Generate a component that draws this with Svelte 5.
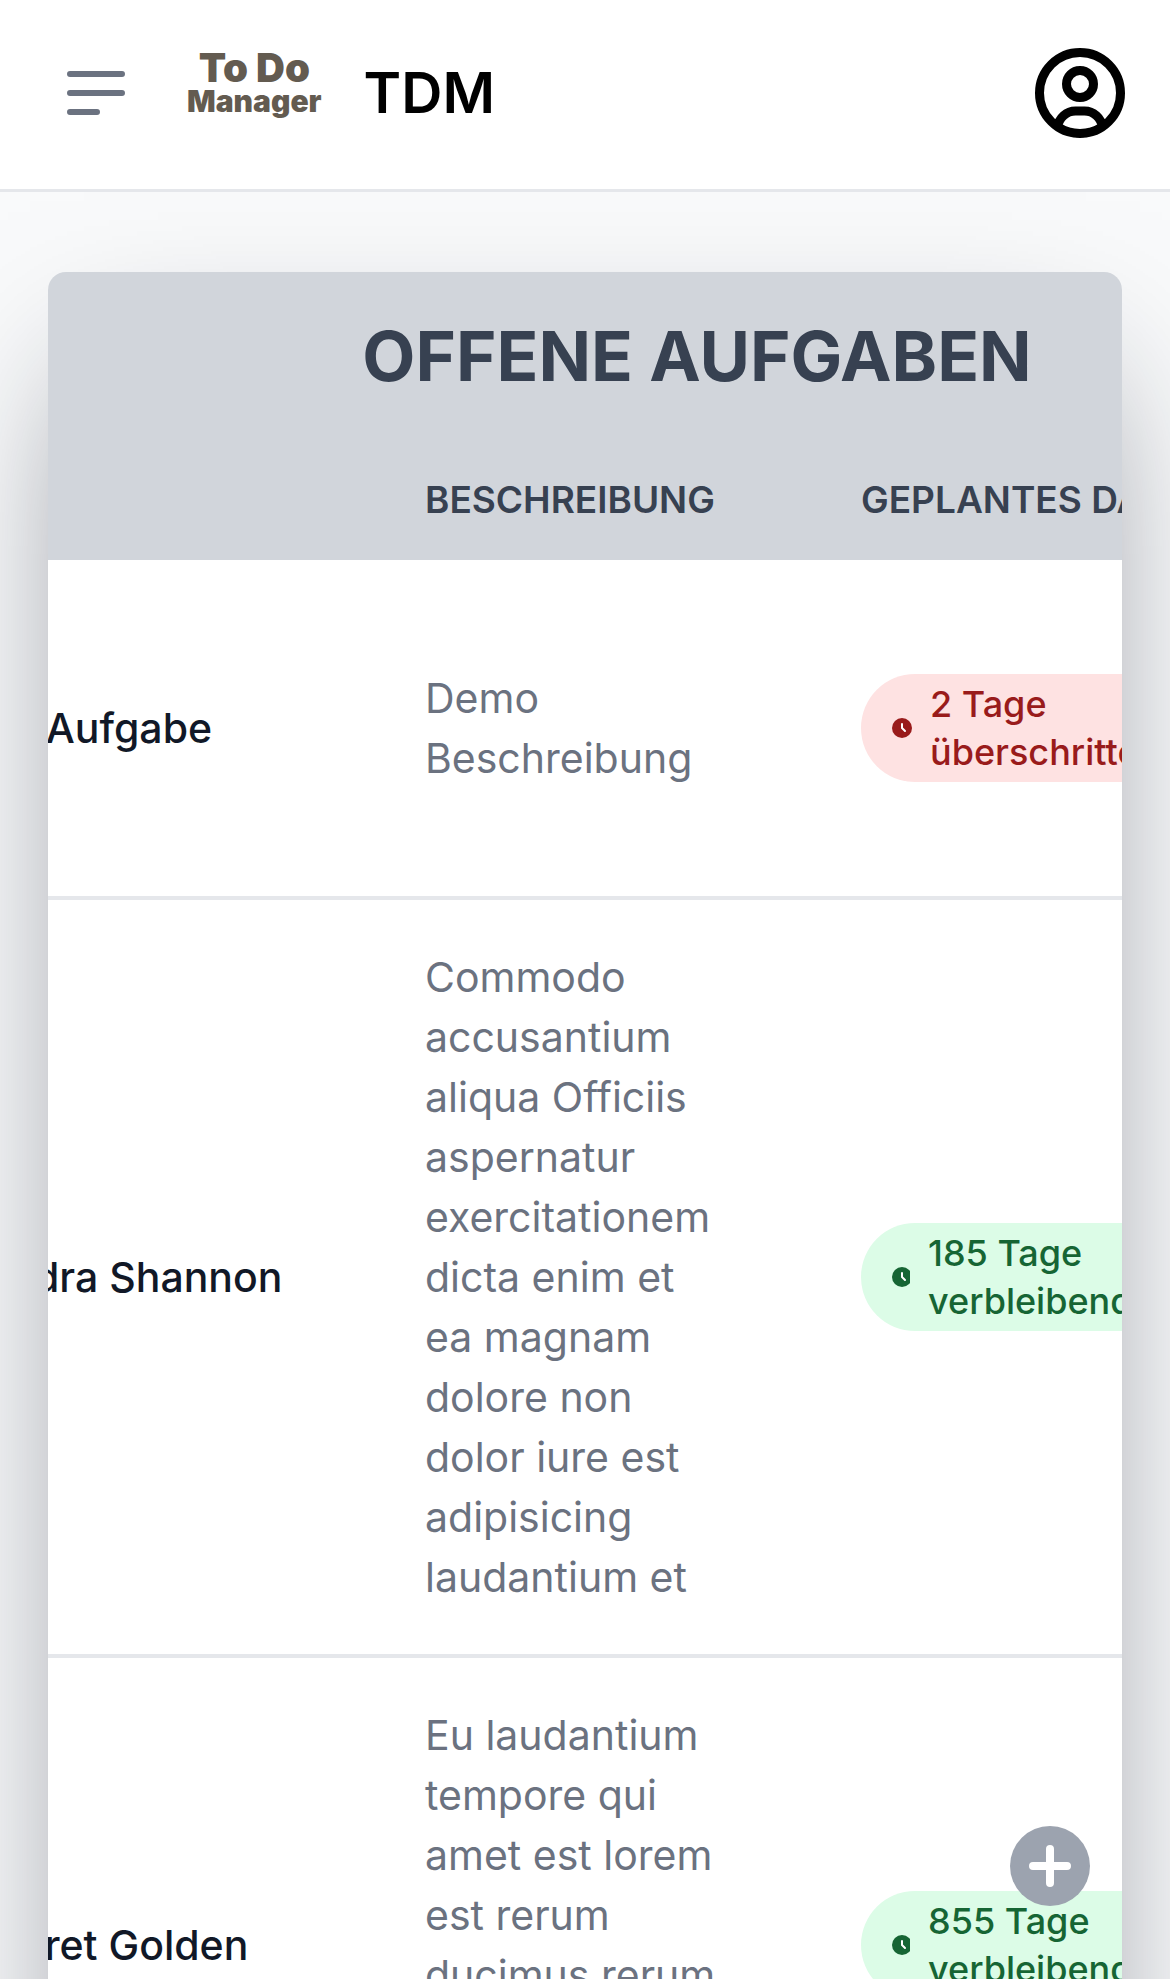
<script>
  import { onMount } from 'svelte';

  let wrapper;

  const tasks = [
    {
      title: 'Demo Aufgabe',
      description: 'Demo Beschreibung',
      days: '2 Tage',
      state: 'überschritten',
      overdue: true
    },
    {
      title: 'Lysandra Shannon',
      description:
        'Commodo accusantium aliqua Officiis aspernatur exercitationem dicta enim et ea magnam dolore non dolor iure est adipisicing laudantium et',
      days: '185 Tage',
      state: 'verbleibend',
      overdue: false
    },
    {
      title: 'Margaret Golden',
      description:
        'Eu laudantium tempore qui amet est lorem est rerum ducimus rerum voluptatem dolorum asperiores',
      days: '855 Tage',
      state: 'verbleibend',
      overdue: false
    }
  ];

  onMount(() => {
    // start with the description column in view
    wrapper.scrollLeft = 200;
  });
</script>

<div class="app">
  <header class="navbar">
    <button type="button" class="icon_button" aria-label="Menü öffnen">
      <svg width="58" height="44" viewBox="0 0 58 44" fill="none" stroke="#6b7280" stroke-width="6" stroke-linecap="round">
        <path d="M3 3h52M3 22h52M3 41h27" />
      </svg>
    </button>
    <a href="/" class="brand">
      <span class="logo">
        <span class="logo_top">To Do</span>
        <span class="logo_bottom">Manager</span>
      </span>
      <span class="brand_name">TDM</span>
    </a>
    <button type="button" class="icon_button profile" aria-label="Profil">
      <svg width="90" height="90" viewBox="0 0 20 20" fill="none" stroke="#000" stroke-width="2" stroke-linecap="round" stroke-linejoin="round">
        <path d="M10 19a9 9 0 1 0 0-18 9 9 0 0 0 0 18Zm0 0a8.949 8.949 0 0 0 4.951-1.488A3.987 3.987 0 0 0 11 14H9a3.987 3.987 0 0 0-3.951 3.512A8.948 8.948 0 0 0 10 19Zm3-11a3 3 0 1 1-6 0 3 3 0 0 1 6 0Z" />
      </svg>
    </button>
  </header>

  <main>
    <div class="table_wrapper" bind:this={wrapper}>
      <table>
        <colgroup>
          <col class="col_title" />
          <col class="col_description" />
          <col class="col_date" />
          <col class="col_action" />
        </colgroup>
        <thead>
          <tr>
            <th colspan="4" class="heading">Offene Aufgaben</th>
          </tr>
          <tr>
            <th scope="col">Titel</th>
            <th scope="col">Beschreibung</th>
            <th scope="col">Geplantes Datum</th>
            <th scope="col"></th>
          </tr>
        </thead>
        <tbody>
          {#each tasks as task}
            <tr>
              <td class="title">{task.title}</td>
              <td>{task.description}</td>
              <td>
                <span class="badge" class:overdue={task.overdue}>
                  <svg class="clock" width={task.overdue ? 21 : 19} height="30" aria-hidden="true">
                    <circle cx="11" cy="15" r="10" fill="currentColor" />
                    <path d="M11 11v4l3 3" fill="none" stroke="#fff" stroke-width="2" stroke-linecap="round" stroke-linejoin="round" />
                  </svg>
                  <span>{task.days}<br />{task.state}</span>
                </span>
              </td>
              <td></td>
            </tr>
          {/each}
        </tbody>
      </table>
    </div>
  </main>

  <button type="button" class="add_button" aria-label="Aufgabe hinzufügen">
    <svg width="42" height="42" viewBox="0 0 42 42" fill="none" stroke="#fff" stroke-width="8" stroke-linecap="round">
      <path d="M21 4v34M4 21h34" />
    </svg>
  </button>
</div>

<style>
  :global(body) {
    margin: 0;
    background: #f9fafb;
  }

  .app {
    display: flex;
    flex-direction: column;
    height: 100vh;
    overflow: hidden;
    font-family: Inter, 'Liberation Sans', sans-serif;
    color: #6b7280;
  }

  .navbar {
    position: relative;
    z-index: 1;
    display: flex;
    align-items: center;
    box-sizing: border-box;
    height: 192px;
    padding: 0 45px 3px 67px;
    background: #fff;
    border-bottom: 3px solid #e5e7eb;
  }

  .icon_button {
    display: flex;
    padding: 0;
    border: none;
    background: none;
    cursor: pointer;
  }

  .profile {
    margin-left: auto;
  }

  .brand {
    display: flex;
    align-items: center;
    gap: 42px;
    margin-left: 62px;
    color: #000;
    text-decoration: none;
  }

  .logo {
    display: flex;
    flex-direction: column;
    align-items: center;
    padding-bottom: 18px;
    font-weight: 900;
    color: #635b50;
  }

  .logo_top {
    font-size: 40px;
    line-height: 34px;
  }

  .logo_bottom {
    font-size: 30px;
    line-height: 32px;
  }

  .brand_name {
    font-size: 57px;
    line-height: 84px;
    font-weight: 600;
  }

  main {
    flex: 1;
    min-height: 0;
    padding: 80px 48px;
    overflow: auto;
    scrollbar-width: none;
  }

  .table_wrapper {
    overflow-x: auto;
    scrollbar-width: none;
    border-radius: 18px;
    background: #fff;
    box-shadow: 0 75px 150px -36px rgba(17, 24, 39, 0.5);
  }

  table {
    width: 1698px;
    table-layout: fixed;
    border-collapse: separate;
    border-spacing: 0;
    text-align: left;
    font-size: 41px;
    line-height: 60px;
  }

  .col_title {
    width: 505px;
  }

  .col_description {
    width: 436px;
  }

  .col_date {
    width: 514px;
  }

  .col_action {
    width: 243px;
  }

  thead {
    background: #d1d5db;
    color: #374151;
    text-transform: uppercase;
  }

  th {
    padding: 36px 72px;
    font-size: 37px;
    line-height: 48px;
    font-weight: 600;
    white-space: nowrap;
  }

  .heading {
    font-size: 69px;
    line-height: 96px;
    font-weight: 700;
    text-align: center;
  }

  td {
    box-sizing: border-box;
    height: 340px;
    padding: 47px 64px 47px 72px;
    border-bottom: 4px solid #e5e7eb;
    vertical-align: middle;
  }

  .title {
    font-weight: 500;
    color: #111827;
    white-space: nowrap;
  }

  .badge {
    display: flex;
    align-items: center;
    gap: 18px;
    padding: 6px 30px;
    border-radius: 54px;
    background: #dcfce7;
    color: #166534;
    font-size: 36px;
    line-height: 48px;
    font-weight: 500;
  }

  .badge.overdue {
    background: #fee2e2;
    color: #991b1b;
  }

  .clock {
    flex-shrink: 0;
  }

  .add_button {
    position: fixed;
    right: 80px;
    bottom: 73px;
    z-index: 2;
    display: flex;
    align-items: center;
    justify-content: center;
    width: 80px;
    height: 80px;
    padding: 0;
    border: none;
    border-radius: 50%;
    background: #9ca3af;
    cursor: pointer;
  }
</style>
